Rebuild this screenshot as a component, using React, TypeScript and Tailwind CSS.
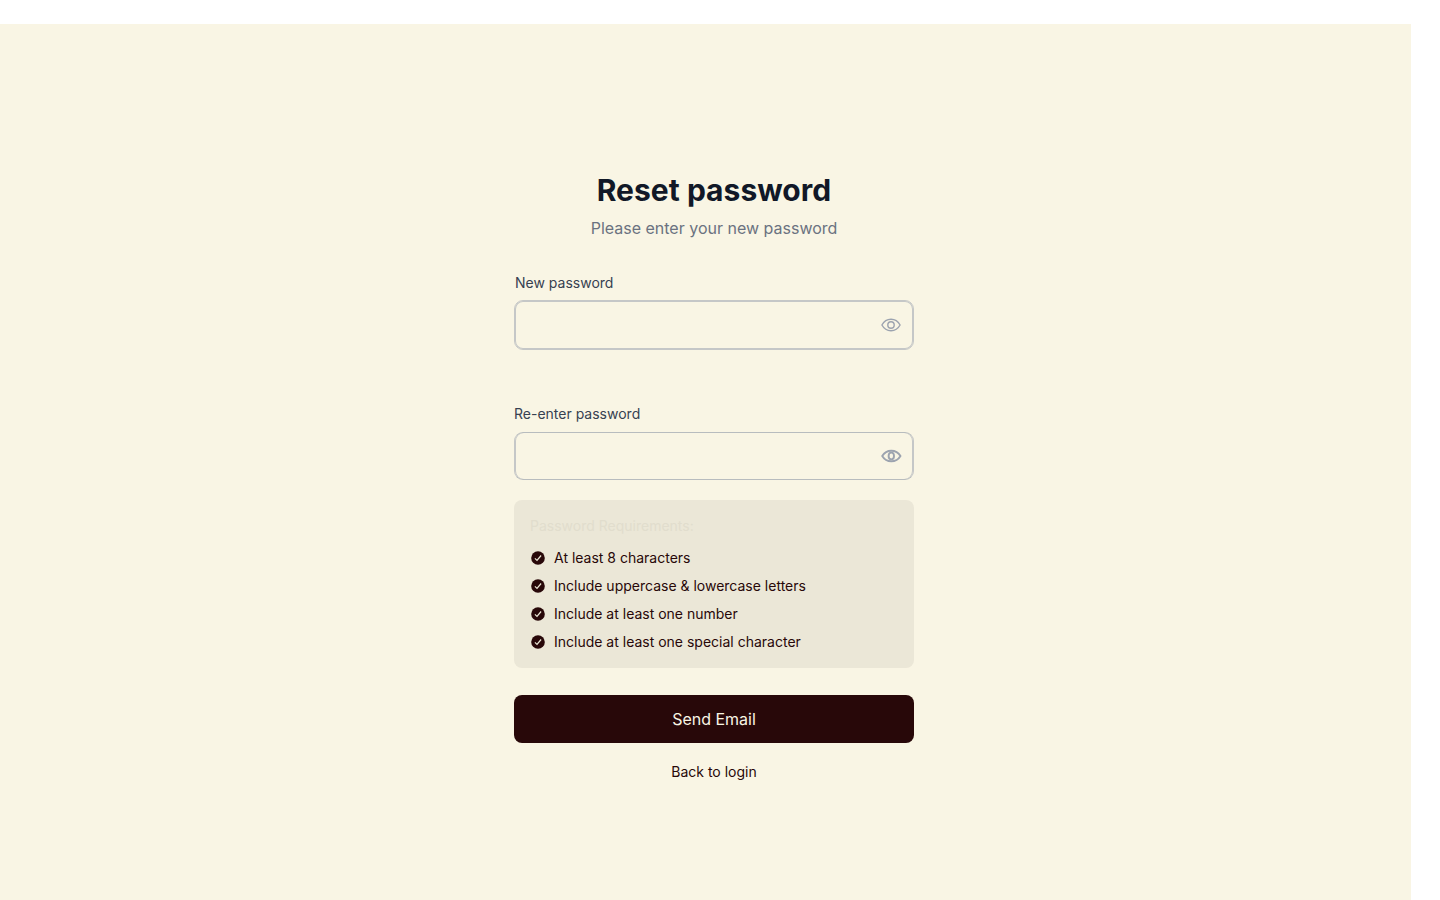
import React from 'react';

const rules = ['At least 8 characters', 'Include uppercase & lowercase letters', 'Include at least one number', 'Include at least one special character'];

function Eye({ bold }: { bold?: boolean }) {
  return (
    <svg width="24" height="24" viewBox="0 0 24 24" fill="none" stroke="#9ca3af" strokeWidth={bold ? 1.9 : 1.4} className="shrink-0">
      <path d={bold ? 'M3.200 12C5.500 8.200 8.500 6.700 12.300 6.700S19.200 8.200 21.500 12C19.200 15.800 16.100 17.300 12.300 17.300S5.500 15.800 3.200 12Z' : 'M2.900 12C5 8.200 8.200 6.300 12 6.300S19 8.200 21.100 12C19 15.800 15.800 17.700 12 17.700S5 15.800 2.900 12Z'} strokeLinejoin="round" />
      <ellipse cx={bold ? 12.3 : 12} cy="12" rx={bold ? 2.7 : 3.2} ry={bold ? 3.4 : 3.2} />
    </svg>
  );
}

function Check() {
  return (
    <svg width="16" height="16" viewBox="0 0 16 16" fill="none" className="shrink-0">
      <circle cx="8" cy="8" r="6.800" fill="#280809" />
      <path d="M4.900 8.400L7 10.400L11.100 5.500" stroke="#ebe7d6" strokeWidth="1.200" />
    </svg>
  );
}

export default function App() {
  return (
    <div className="h-[900px] w-[1440px] overflow-hidden bg-white pt-6 pr-[29px] font-['Inter',sans-serif] antialiased">
      <main className="h-[876px] bg-[#f9f5e4] pt-[146px] pl-[514px]">
        <div className="flex w-[400px] flex-col">
          <h1 className="text-center text-[30px] leading-[40px] font-bold tracking-[0.03px] text-[#111827]">Reset password</h1>
          <p className="mt-1.5 text-center text-base leading-6 text-[#6b7280]">Please enter your new password</p>
          <label className="mt-[33px] pl-px text-sm leading-5 text-[#374151]">New password</label>
          <div className="mt-[7px] flex h-[50px] items-center justify-end rounded-[9px] border border-[#c5c7c7] pr-2.5 shadow-[inset_0_0_0_1px_#c5c7c7]"><Eye /></div>
          <label className="mt-[54px] text-sm leading-5 text-[#374151]">Re-enter password</label>
          <div className="mt-2 flex h-12 items-center justify-end rounded-[9px] border border-x-[#c5c7c7] border-y-[#b8bcbe] pr-2.5 shadow-[inset_1px_0_0_#c5c7c7,inset_-1px_0_0_#c5c7c7]"><Eye bold /></div>
          <section className="mt-5 h-[168px] rounded-lg bg-[#ebe7d7] px-4 pt-4 text-sm leading-5">
            <h2 className="text-[#e1ddcd]">Password Requirements:</h2>
            <ul className="mt-3 flex flex-col gap-2 text-[#280809]">
              {rules.map((r) => <li key={r} className="flex items-center gap-2"><Check />{r}</li>)}
            </ul>
          </section>
          <button className="mt-[27px] h-12 rounded-lg bg-[#280809] text-base text-[#f9f5e4]">Send Email</button>
          <a className="mt-[19px] text-center text-sm leading-5 text-[#280809]">Back to login</a>
        </div>
      </main>
    </div>
  );
}
